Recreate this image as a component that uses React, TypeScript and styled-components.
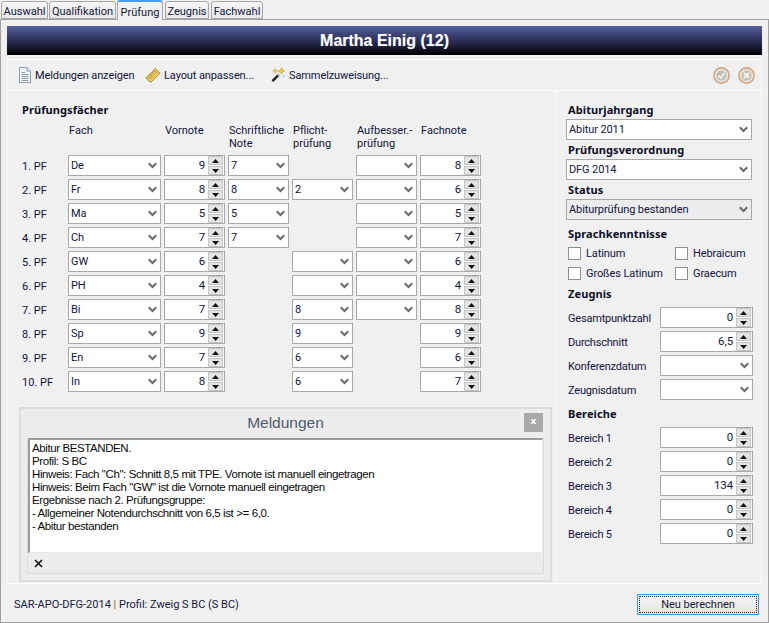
import React from 'react';
import styled, { createGlobalStyle } from 'styled-components';

const Global = createGlobalStyle`
  html, body { margin: 0; padding: 0; background: #f0f0f0; }
  body { font-family: Roboto, "Liberation Sans", sans-serif; font-size: 11px; letter-spacing: -0.1px; color: #10143c; }
  * { box-sizing: border-box; }
`;

const Page = styled.div`
  width: 769px; height: 623px; overflow: hidden; display: flex; flex-direction: column; background: #f0f0f0;
`;
const TabBar = styled.div`
  display: flex; padding-left: 1px; height: 19px; align-items: flex-end; position: relative; z-index: 1;
`;
const Tab = styled.div<{ $w: number; $gap: number; $active?: boolean }>`
  width: ${p => p.$w}px; height: ${p => (p.$active ? 20 : 18)}px;
  margin-bottom: ${p => (p.$active ? -1 : 0)}px;
  margin-right: ${p => p.$gap}px;
  border: 1px solid #a8a8a8; border-bottom: ${p => (p.$active ? 'none' : '1px solid #a8a8a8')};
  border-top: ${p => (p.$active ? '2px solid #4a9cf0' : '1px solid #a8a8a8')};
  border-radius: 3px 3px 0 0;
  background: ${p => (p.$active ? '#f0f0f0' : 'linear-gradient(#f6f6f6,#e8e8e8)')};
  font-size: 11px; letter-spacing: 0; line-height: ${p => (p.$active ? 21 : 20)}px; text-align: center; white-space: nowrap; color: #14183c;
`;
const Frame = styled.div`
  width: 769px; height: 604px; border: 1px solid #a0a0a0; padding: 6px 6px 0 6px;
  display: flex; flex-direction: column;
`;
const TitleBar = styled.div`
  height: 29px; background: linear-gradient(#565f9c, #2c3058 50%, #000); color: #fff;
  font-family: "Liberation Sans", sans-serif; font-weight: 700; font-size: 16px; letter-spacing: 0; line-height: 30px; text-align: center;
  text-shadow: 0 0 1px rgba(255,255,255,.4); flex: none;
`;
const Card = styled.div`
  margin-top: 4px; height: 525px; border: 1px solid #fcfcfc; display: flex; flex-direction: column; flex: none;
`;
const Toolbar = styled.div`
  height: 31px; flex: none; border-bottom: 1px solid #fbfbfb; display: flex; align-items: center; padding: 0 6px 0 10px;
`;
const ToolItem = styled.div<{ $w: number }>`
  width: ${p => p.$w}px; flex: none; display: flex; align-items: center; gap: 3px; white-space: nowrap; font-size: 11px;
  & > svg { flex: none; }
`;
const ToolSpacer = styled.div`flex: 1;`;
const RoundIcon = styled.div`
  width: 17px; height: 17px; margin-left: 8px; display: flex;
`;
const Body = styled.div`flex: 1; display: flex; min-height: 0;`;
const LeftCol = styled.div`
  width: 549px; flex: none; border-right: 1px solid #fbfbfb; padding: 12px 3px 0 11px;
`;
const RightCol = styled.div`
  flex: none; padding: 12px 0 0 9px; width: 195px;
`;
const SectionTitle = styled.div<{ $mt?: number; $mb?: number; $ml?: number }>`
  font-family: "Noto Sans", sans-serif;
  font-weight: 700; font-size: 11px; letter-spacing: 0.1px; line-height: 14px; color: #0c0e24; white-space: nowrap;
  margin-top: ${p => p.$mt ?? 0}px; margin-bottom: ${p => p.$mb ?? 2}px; margin-left: ${p => p.$ml ?? 2}px;
`;
const SubjectGrid = styled.div`
  margin-left: 3px; margin-top: 6px;
  display: grid; grid-template-columns: 43px 93px 61px 61px 61px 61px 61px; column-gap: 3px; row-gap: 3px;
  grid-template-rows: 29px; grid-auto-rows: 21px; width: 526px;
`;
const HeadCell = styled.div`
  line-height: 13px; white-space: nowrap; font-size: 11px; letter-spacing: 0; padding: 1px 0 0 1px; color: #10143c;
`;
const HeadRow = styled.div`
  grid-column: 1 / -1; display: grid; grid-template-columns: subgrid;
`;
const RowLabel = styled.div`
  line-height: 21px; white-space: nowrap; font-size: 11px; letter-spacing: 0; padding-top: 1px;
`;
const Empty = styled.div``;
const FieldBox = styled.div<{ $disabled?: boolean }>`
  height: 21px; border: 1px solid #a8a8a8; background: ${p => (p.$disabled ? '#ececec' : '#fff')};
  display: flex; align-items: center; font-size: 11px; color: #10143c; white-space: nowrap;
`;
const SelectText = styled.span`flex: 1; padding-left: 2px; line-height: 19px;`;
const Chevron = styled.svg`margin-right: 3px; flex: none;`;
const SpinText = styled.span`flex: 1; text-align: right; padding-right: 3px; line-height: 19px; font-size: 11.5px;`;
const SpinButtons = styled.div`
  width: 15px; flex: none; height: 19px; display: flex; flex-direction: column; gap: 1px; margin-right: 1px;
`;
const SpinButton = styled.div`
  flex: 1; background: #e4e4e4; border: 1px solid #c4c4c4; display: flex; align-items: center; justify-content: center;
`;
const Row = styled.div`
  display: grid; grid-template-columns: 92px 93px; column-gap: 2px; margin-bottom: 3px; height: 21px; width: 187px; align-items: center;
`;
const RowCaption = styled.div`font-size: 11px; letter-spacing: -0.2px; white-space: nowrap; padding-left: 2px; padding-top: 1px;`;
const CheckGrid = styled.div`
  display: grid; grid-template-columns: 107px 80px; row-gap: 7px; padding-left: 2px; margin-top: 6px;
`;
const CheckItem = styled.label`
  display: flex; align-items: center; gap: 5px; font-size: 11px; height: 13px; white-space: nowrap;
`;
const CheckBox = styled.span`
  width: 13px; height: 13px; border: 1px solid #8e8e8e; background: #fff; flex: none;
`;
const MessagePanel = styled.div`
  margin-top: 15px; width: 533px; height: 175px; border: 2px solid #dcdcdc; background: #ececec;
  display: flex; flex-direction: column; padding: 0 6px 6px 6px;
`;
const MessageHead = styled.div`
  height: 29px; flex: none; position: relative; text-align: center; font-size: 15.5px; letter-spacing: 0; line-height: 28px; color: #4e5a6e;
  font-family: "Liberation Sans", sans-serif;
`;
const CloseBox = styled.div`
  position: absolute; right: 1px; top: 4px; width: 19px; height: 19px; background: #a9a9a9; color: #fff;
  font: 700 9px/17px "DejaVu Sans", sans-serif; text-align: center;
`;
const MessageInner = styled.div`
  flex: 1; border: 1px solid #dcdcdc; border-top: none; display: flex; flex-direction: column; min-height: 0;
`;
const MessageText = styled.div`
  height: 115px; flex: none; background: #fff; border-top: 2px solid #9c9c9c; border-left: 2px solid #9c9c9c;
  border-right: 1px solid #e8e8e8; border-bottom: 1px solid #e8e8e8;
  padding: 2px 0 0 2px; font: 11.5px/13px "Liberation Sans", sans-serif; letter-spacing: -0.4px; color: #0a0a0a; white-space: pre;
`;
const MessageBar = styled.div`
  flex: 1; padding-left: 6px; display: flex; align-items: center;
`;
const Footer = styled.div`
  flex: 1; display: flex; align-items: center; justify-content: space-between; padding: 3px 3px 0 7px;
`;
const FooterText = styled.div`font-size: 11px; letter-spacing: 0; color: #14183c; white-space: nowrap;`;
const Separator = styled.span`color: #a85c10;`;
const PrimaryButton = styled.div`
  width: 122px; height: 21px; border: 1px solid #3c9af0; background: linear-gradient(#f4f4f4,#e6e6e6);
  padding: 1px; font-size: 11px; letter-spacing: 0; color: #14183c;
`;
const FocusRing = styled.div`
  height: 100%; border: 1px dotted #222; text-align: center; line-height: 16px;
`;

const ChevronIcon = () => (
  <Chevron width="9" height="7" viewBox="0 0 9 7">
    <path d="M.8 1.2 L4.5 5 L8.2 1.2" fill="none" stroke="#6a6a6a" strokeWidth="2" />
  </Chevron>
);
const Select = ({ value = '', disabled }: { value?: string; disabled?: boolean }) => (
  <FieldBox $disabled={disabled}>
    <SelectText>{value}</SelectText>
    <ChevronIcon />
  </FieldBox>
);
const Spin = ({ value }: { value: string | number }) => (
  <FieldBox>
    <SpinText>{value}</SpinText>
    <SpinButtons>
      <SpinButton><svg width="7" height="4" viewBox="0 0 7 4"><path d="M3.5 0 L7 4 H0 Z" fill="#111" /></svg></SpinButton>
      <SpinButton><svg width="7" height="4" viewBox="0 0 7 4"><path d="M0 0 H7 L3.5 4 Z" fill="#111" /></svg></SpinButton>
    </SpinButtons>
  </FieldBox>
);

const DocIcon = () => (
  <svg width="14" height="17" viewBox="0 0 14 17">
    <path d="M1.5 .5 H9 L12.5 4 V15.5 H1.5 Z" fill="#f4f6fa" stroke="#8a9ab8" />
    <path d="M9 .5 V4 H12.5" fill="#dfe6f0" stroke="#8a9ab8" />
    <path d="M3.5 5.5 H7 M3.5 7.5 H10.5 M3.5 9.5 H10.5 M3.5 11.5 H10.5 M3.5 13.5 H10.5" stroke="#8896ae" />
  </svg>
);
const RulerIcon = () => (
  <svg width="16" height="17" viewBox="0 0 17 17">
    <path d="M1 11 L11 1 L16 6 L6 16 Z" fill="#eac862" stroke="#a88428" />
    <path d="M4 9.5 L6 11.5 M6 7.5 L8 9.5 M8 5.5 L10 7.5 M10 3.5 L12 5.5" stroke="#7c5e14" />
  </svg>
);
const WandIcon = () => (
  <svg width="15" height="16" viewBox="0 0 16 16">
    <path d="M1.5 14.5 L9 7" stroke="#222" strokeWidth="2.6" />
    <path d="M7.5 8.5 L10 6" stroke="#ddd" strokeWidth="2.4" />
    <path d="M11 0 L12.2 2.6 L15 3.4 L12.4 4.6 L11.4 7.2 L10 4.8 L7.4 3.8 L10 2.8 Z" fill="#f2cf40" stroke="#b89420" strokeWidth=".5" />
    <path d="M4.5 1 L5.4 3 L7.4 3.6 L5.4 4.3 L4.5 6.2 L3.6 4.3 L1.6 3.6 L3.6 3 Z" fill="#f2cf40" stroke="#b89420" strokeWidth=".4" />
    <path d="M13.5 7 L14 8.5 L15.5 9 L14 9.5 L13.5 11 L13 9.5 L11.5 9 L13 8.5 Z" fill="#a8c8e8" />
  </svg>
);
const RoundGlyph = ({ kind }: { kind: 'ok' | 'no' }) => (
  <svg width="17" height="17" viewBox="0 0 17 17">
    <circle cx="8.5" cy="8.5" r="7.6" fill="#ece6e0" stroke="#d0a684" strokeWidth="1.6" />
    <circle cx="8.5" cy="8.5" r="5.2" fill="#c4c0ba" />
    {kind === 'ok'
      ? <path d="M5.6 8.6 L7.8 10.8 L11.4 6" fill="none" stroke="#f2f0ee" strokeWidth="1.8" />
      : <path d="M6 6 L11 11 M11 6 L6 11" stroke="#f2f0ee" strokeWidth="1.9" />}
  </svg>
);

type Subject = [string, string, number, string | null, string | null, boolean, number];
const subjects: Subject[] = [
  ['1. PF', 'De', 9, '7', null, true, 8],
  ['2. PF', 'Fr', 8, '8', '2', true, 6],
  ['3. PF', 'Ma', 5, '5', null, true, 5],
  ['4. PF', 'Ch', 7, '7', null, true, 7],
  ['5. PF', 'GW', 6, null, '', true, 6],
  ['6. PF', 'PH', 4, null, '', true, 4],
  ['7. PF', 'Bi', 7, null, '8', true, 8],
  ['8. PF', 'Sp', 9, null, '9', false, 9],
  ['9. PF', 'En', 7, null, '6', false, 6],
  ['10. PF', 'In', 8, null, '6', false, 7],
];

const message = `Abitur BESTANDEN.
Profil: S BC
Hinweis: Fach "Ch": Schnitt 8,5 mit TPE. Vornote ist manuell eingetragen
Hinweis: Beim Fach "GW" ist die Vornote manuell eingetragen
Ergebnisse nach 2. Prüfungsgruppe:
- Allgemeiner Notendurchschnitt von 6,5 ist >= 6,0.
- Abitur bestanden`;

export default function App() {
  return (
    <Page>
      <Global />
      <TabBar>
        <Tab $w={47} $gap={1}>Auswahl</Tab>
        <Tab $w={67} $gap={1}>Qualifikation</Tab>
        <Tab $w={46} $gap={2} $active>Prüfung</Tab>
        <Tab $w={44} $gap={2}>Zeugnis</Tab>
        <Tab $w={52} $gap={0}>Fachwahl</Tab>
      </TabBar>
      <Frame>
        <TitleBar>Martha Einig (12)</TitleBar>
        <Card>
          <Toolbar>
            <ToolItem $w={127}><DocIcon /><span>Meldungen anzeigen</span></ToolItem>
            <ToolItem $w={126}><RulerIcon /><span>Layout anpassen...</span></ToolItem>
            <ToolItem $w={120}><WandIcon /><span>Sammelzuweisung...</span></ToolItem>
            <ToolSpacer />
            <RoundIcon><RoundGlyph kind="ok" /></RoundIcon>
            <RoundIcon><RoundGlyph kind="no" /></RoundIcon>
          </Toolbar>
          <Body>
            <LeftCol>
              <SectionTitle $ml={3}>Prüfungsfächer</SectionTitle>
              <SubjectGrid>
                <HeadRow>
                  <Empty />
                  <HeadCell>Fach</HeadCell>
                  <HeadCell>Vornote</HeadCell>
                  <HeadCell>Schriftliche<br />Note</HeadCell>
                  <HeadCell>Pflicht-<br />prüfung</HeadCell>
                  <HeadCell>Aufbesser.-<br />prüfung</HeadCell>
                  <HeadCell>Fachnote</HeadCell>
                </HeadRow>
                {subjects.map(([label, fach, vor, schrift, pflicht, auf, note]) => (
                  <React.Fragment key={label}>
                    <RowLabel>{label}</RowLabel>
                    <Select value={fach} />
                    <Spin value={vor} />
                    {schrift !== null ? <Select value={schrift} /> : <Empty />}
                    {pflicht !== null ? <Select value={pflicht} /> : <Empty />}
                    {auf ? <Select /> : <Empty />}
                    <Spin value={note} />
                  </React.Fragment>
                ))}
              </SubjectGrid>
              <MessagePanel>
                <MessageHead>Meldungen<CloseBox>x</CloseBox></MessageHead>
                <MessageInner>
                  <MessageText>{message}</MessageText>
                  <MessageBar>
                    <svg width="9" height="9" viewBox="0 0 9 9"><path d="M1 1 L8 8 M8 1 L1 8" stroke="#111" strokeWidth="1.7" /></svg>
                  </MessageBar>
                </MessageInner>
              </MessagePanel>
            </LeftCol>
            <RightCol>
              <SectionTitle>Abiturjahrgang</SectionTitle>
              <Select value="Abitur 2011" />
              <SectionTitle $mt={3}>Prüfungsverordnung</SectionTitle>
              <Select value="DFG 2014" />
              <SectionTitle $mt={3}>Status</SectionTitle>
              <Select value="Abiturprüfung bestanden" disabled />
              <SectionTitle $mt={7} $mb={0}>Sprachkenntnisse</SectionTitle>
              <CheckGrid>
                <CheckItem><CheckBox />Latinum</CheckItem>
                <CheckItem><CheckBox />Hebraicum</CheckItem>
                <CheckItem><CheckBox />Großes Latinum</CheckItem>
                <CheckItem><CheckBox />Graecum</CheckItem>
              </CheckGrid>
              <SectionTitle $mt={7} $mb={6}>Zeugnis</SectionTitle>
              <Row><RowCaption>Gesamtpunktzahl</RowCaption><Spin value="0" /></Row>
              <Row><RowCaption>Durchschnitt</RowCaption><Spin value="6,5" /></Row>
              <Row><RowCaption>Konferenzdatum</RowCaption><Select /></Row>
              <Row><RowCaption>Zeugnisdatum</RowCaption><Select /></Row>
              <SectionTitle $mt={7} $mb={6}>Bereiche</SectionTitle>
              <Row><RowCaption>Bereich 1</RowCaption><Spin value="0" /></Row>
              <Row><RowCaption>Bereich 2</RowCaption><Spin value="0" /></Row>
              <Row><RowCaption>Bereich 3</RowCaption><Spin value="134" /></Row>
              <Row><RowCaption>Bereich 4</RowCaption><Spin value="0" /></Row>
              <Row><RowCaption>Bereich 5</RowCaption><Spin value="0" /></Row>
            </RightCol>
          </Body>
        </Card>
        <Footer>
          <FooterText>SAR-APO-DFG-2014 <Separator>|</Separator> Profil: Zweig S BC (S BC)</FooterText>
          <PrimaryButton><FocusRing>Neu berechnen</FocusRing></PrimaryButton>
        </Footer>
      </Frame>
    </Page>
  );
}
